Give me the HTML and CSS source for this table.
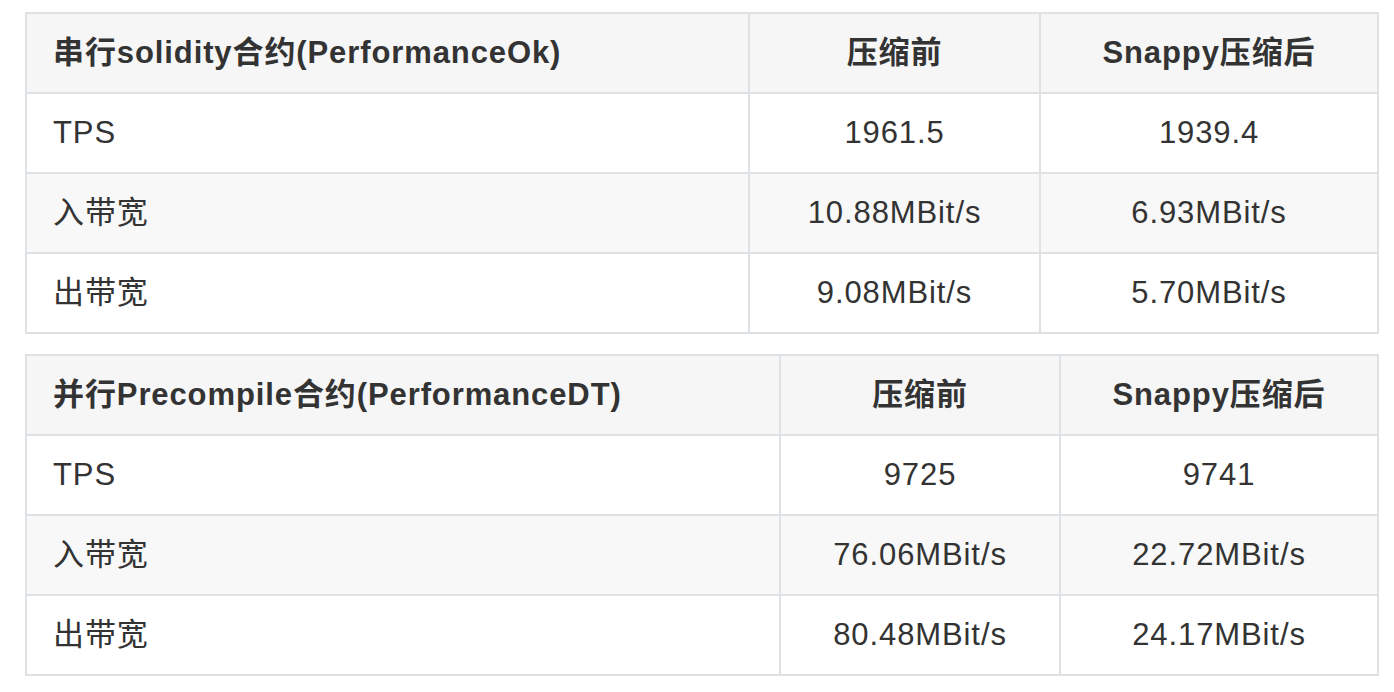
FILE: index.html
```html
<!DOCTYPE html>
<html lang="zh">
<head>
<meta charset="utf-8">
<title>Tables</title>
<link rel="stylesheet" href="styles.css">
</head>
<body>
<table class="perf perf-a">
  <colgroup><col class="c1"><col class="c2"><col class="c3"></colgroup>
  <thead>
    <tr><th class="left">串行solidity合约(PerformanceOk)</th><th>压缩前</th><th>Snappy压缩后</th></tr>
  </thead>
  <tbody>
    <tr><td class="left">TPS</td><td>1961.5</td><td>1939.4</td></tr>
    <tr><td class="left">入带宽</td><td>10.88MBit/s</td><td>6.93MBit/s</td></tr>
    <tr><td class="left">出带宽</td><td>9.08MBit/s</td><td>5.70MBit/s</td></tr>
  </tbody>
</table>
<table class="perf perf-b">
  <colgroup><col class="c1"><col class="c2"><col class="c3"></colgroup>
  <thead>
    <tr><th class="left">并行Precompile合约(PerformanceDT)</th><th>压缩前</th><th>Snappy压缩后</th></tr>
  </thead>
  <tbody>
    <tr><td class="left">TPS</td><td>9725</td><td>9741</td></tr>
    <tr><td class="left">入带宽</td><td>76.06MBit/s</td><td>22.72MBit/s</td></tr>
    <tr><td class="left">出带宽</td><td>80.48MBit/s</td><td>24.17MBit/s</td></tr>
  </tbody>
</table>
</body>
</html>
```

FILE: styles.css
```css
html, body {
  margin: 0;
  padding: 0;
  background: #ffffff;
}
body {
  padding: 12px 0 0 25px;
  font-family: "Liberation Sans", "Noto Sans CJK SC", sans-serif;
  color: #333333;
  font-size: 31px;
  line-height: 36px;
  letter-spacing: 0.9px;
}
.perf {
  border-collapse: collapse;
  table-layout: fixed;
  width: 1354px;
  border: 2px solid #dfe2e5;
}
.perf-b {
  margin-top: 20px;
}
.perf-a .c1 { width: 723px; }
.perf-a .c2 { width: 291px; }
.perf-a .c3 { width: 338px; }
.perf-b .c1 { width: 754px; }
.perf-b .c2 { width: 280px; }
.perf-b .c3 { width: 318px; }
.perf th, .perf td {
  border: 2px solid #dfe2e5;
  height: 80px;
  padding: 0 26px;
  text-align: center;
  vertical-align: middle;
  box-sizing: border-box;
  white-space: nowrap;
}
.perf th {
  font-weight: bold;
  background: #f6f6f6;
}
.perf th.left, .perf td.left {
  text-align: left;
}
.perf tbody tr:nth-child(2) {
  background: #f8f8f8;
}
```
